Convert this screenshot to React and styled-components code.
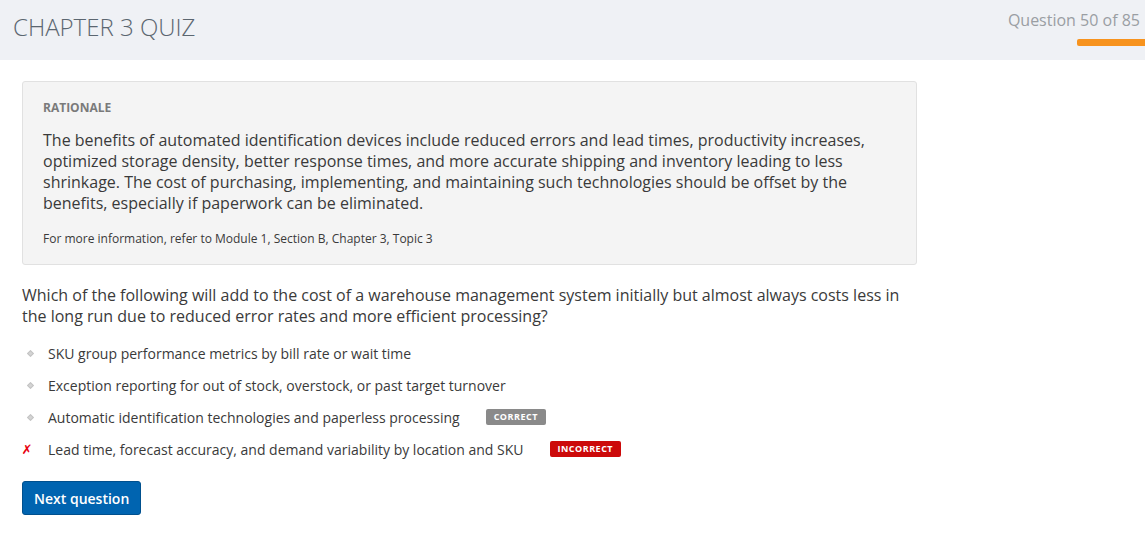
import React from "react";
import styled, { createGlobalStyle } from "styled-components";

const GlobalStyle = createGlobalStyle`
  body {
    margin: 0;
    background: #fff;
    font-family: "Open Sans", "Liberation Sans", sans-serif;
    color: #333;
  }
`;

const Header = styled.header`
  height: 60px;
  background: #eff1f5;
  display: flex;
  justify-content: space-between;
  align-items: flex-start;
`;

const Title = styled.h1`
  margin: 10px 0 0 13px;
  font-size: 24px;
  font-weight: 300;
  color: #5b6670;
`;

const Progress = styled.div`
  display: flex;
  flex-direction: column;
  align-items: flex-end;
  padding-top: 9px;
`;

const ProgressLabel = styled.div`
  font-size: 16px;
  color: #9a9ea3;
  padding-right: 5px;
  line-height: 22px;
`;

const ProgressBar = styled.div`
  margin-top: 8px;
  width: 68px;
  height: 7px;
  background: #f7931e;
  border-radius: 2px 0 0 2px;
`;

const Main = styled.main`
  padding: 21px 22px 0;
`;

const Rationale = styled.section`
  width: 895px;
  box-sizing: border-box;
  background: #f4f4f4;
  border: 1px solid #e1e1e1;
  border-radius: 3px;
  padding: 17px 20px 16px;
`;

const Label = styled.div`
  font-size: 12px;
  font-weight: 700;
  color: #7a7a7a;
  line-height: 18px;
`;

const RationaleText = styled.p`
  margin: 13px 0 0;
  font-size: 16px;
  line-height: 21px;
  color: #3a3a3a;
`;

const Reference = styled.p`
  margin: 16px 0 0;
  font-size: 12px;
  line-height: 18px;
  color: #3a3a3a;
`;

const Question = styled.p`
  margin: 20px 0 0;
  width: 895px;
  font-size: 16px;
  line-height: 21px;
  color: #3a3a3a;
`;

const Options = styled.ul`
  list-style: none;
  margin: 10px 0 0;
  padding: 0;
`;

const Option = styled.li`
  display: flex;
  align-items: center;
  height: 32px;
  font-size: 14px;
  color: #3a3a3a;
`;

const Marker = styled.span`
  width: 26px;
  display: flex;
  align-items: center;
  justify-content: center;
  flex-shrink: 0;
`;

const Dot = styled.span`
  width: 3px;
  height: 3px;
  background: #d4d4d4;
  border: 1px solid #c4c4c4;
  transform: rotate(45deg);
  margin-left: -10px;
`;

const Cross = styled.span`
  color: #e8000f;
  font-family: "DejaVu Sans", sans-serif;
  font-size: 13px;
  font-weight: 700;
  font-style: italic;
  margin-left: -16px;
`;

const Badge = styled.span`
  margin-left: ${(p) => p.$gap}px;
  background: ${(p) => p.$bg};
  color: #fff;
  font-size: 9px;
  font-weight: 700;
  letter-spacing: 0.5px;
  line-height: 16px;
  height: 16px;
  padding: 0 ${(p) => p.$pad}px;
  border-radius: 2px;
`;

const NextButton = styled.button`
  margin-top: 16px;
  background: #0064b0;
  color: #fff;
  border: 1px solid #00508e;
  border-radius: 3px;
  font-family: inherit;
  font-size: 14px;
  font-weight: 600;
  height: 34px;
  padding: 0 11px;
  cursor: pointer;
`;

const options = [
  { text: "SKU group performance metrics by bill rate or wait time" },
  { text: "Exception reporting for out of stock, overstock, or past target turnover" },
  {
    text: "Automatic identification technologies and paperless processing",
    badge: { label: "CORRECT", bg: "#8a8a8a", gap: 26, pad: 8 },
  },
  {
    text: "Lead time, forecast accuracy, and demand variability by location and SKU",
    wrong: true,
    badge: { label: "INCORRECT", bg: "#cc0a0a", gap: 26, pad: 8 },
  },
];

export default function App() {
  return (
    <>
      <GlobalStyle />
      <Header>
        <Title>CHAPTER 3 QUIZ</Title>
        <Progress>
          <ProgressLabel>Question 50 of 85</ProgressLabel>
          <ProgressBar />
        </Progress>
      </Header>
      <Main>
        <Rationale>
          <Label>RATIONALE</Label>
          <RationaleText>
            The benefits of automated identification devices include reduced errors and lead
            times, productivity increases, optimized storage density, better response times, and
            more accurate shipping and inventory leading to less shrinkage. The cost of
            purchasing, implementing, and maintaining such technologies should be offset by the
            benefits, especially if paperwork can be eliminated.
          </RationaleText>
          <Reference>For more information, refer to Module 1, Section B, Chapter 3, Topic 3</Reference>
        </Rationale>
        <Question>
          Which of the following will add to the cost of a warehouse management system initially
          but almost always costs less in the long run due to reduced error rates and more
          efficient processing?
        </Question>
        <Options>
          {options.map((o) => (
            <Option key={o.text}>
              <Marker>{o.wrong ? <Cross>✗</Cross> : <Dot />}</Marker>
              {o.text}
              {o.badge && (
                <Badge $bg={o.badge.bg} $gap={o.badge.gap} $pad={o.badge.pad}>
                  {o.badge.label}
                </Badge>
              )}
            </Option>
          ))}
        </Options>
        <NextButton>Next question</NextButton>
      </Main>
    </>
  );
}
